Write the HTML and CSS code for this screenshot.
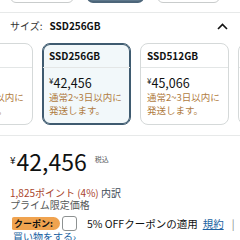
FILE: index.html
```html
<!DOCTYPE html>
<html lang="ja">
<head>
<meta charset="utf-8">
<link rel="stylesheet" href="styles.css">
</head>
<body>
<div class="swatches">
  <div class="swatch sw1"></div>
  <div class="swatch sw2 sel"></div>
  <div class="swatch sw3"></div>
</div>
<div class="rule rule-top"></div>
<div class="size-head">
  <span class="label">サイズ:</span><span class="value">SSD256GB</span>
  <svg class="chev" width="11" height="7" viewBox="0 0 11 7"><path d="M1 6 L5.5 1.5 L10 6" fill="none" stroke="#111" stroke-width="1.6"/></svg>
</div>
<div class="cards">
  <div class="card">
    <div class="card-head">SSD128</div>
    <div class="card-body">
      <div class="price"><span class="yen">¥</span>37,800</div>
      <div class="ship">通常2~3日以内に発送します。</div>
    </div>
  </div>
  <div class="card selected">
    <div class="card-head">SSD256GB</div>
    <div class="card-body">
      <div class="price"><span class="yen">¥</span>42,456</div>
      <div class="ship">通常2~3日以内に発送します。</div>
    </div>
  </div>
  <div class="card">
    <div class="card-head">SSD512GB</div>
    <div class="card-body">
      <div class="price"><span class="yen">¥</span>45,066</div>
      <div class="ship">通常2~3日以内に発送します。</div>
    </div>
  </div>
  <div class="card">
    <div class="card-head">SSD1TB</div>
    <div class="card-body">
      <div class="price"><span class="yen">¥</span>52,800</div>
      <div class="ship">通常2~3日以内に発送します。</div>
    </div>
  </div>
</div>
<div class="rule rule-mid"></div>
<div class="big-price"><span class="big-yen">¥</span><span class="big-num">42,456</span><span class="tax">税込</span></div>
<div class="points"><span class="pt">1,825ポイント (4%)</span> <span class="breakdown">内訳</span></div>
<div class="prime">プライム限定価格</div>
<div class="coupon">
  <span class="badge">クーポン:</span>
  <span class="check"></span>
  <span class="coupon-text">5% OFFクーポンの適用</span>
  <a class="terms">規約</a>
  <span class="sep">|</span>
</div>
<div class="shop">買い物をする›</div>
</body>
</html>
```

FILE: styles.css
```css
html, body {
  margin: 0;
  padding: 0;
  background: #fff;
}
body {
  width: 240px;
  height: 240px;
  overflow: hidden;
  font-family: "Noto Sans CJK JP", "Noto Sans", sans-serif;
  color: #0f1111;
}
.swatches {
  height: 3px;
  overflow: hidden;
  display: flex;
  align-items: flex-end;
  padding-left: 10px;
  gap: 13px;
}
.swatch {
  flex: none;
  height: 20px;
  border: 1px solid #c9cccc;
  border-radius: 6px;
  box-sizing: border-box;
}
.sw1 { width: 64px; }
.sw2 { width: 57px; }
.sw3 { width: 63px; }
.swatch.sel {
  border: 2px solid #4d667a;
  background: #5e778b;
}
.rule {
  height: 1px;
  background: #e7e9e9;
}
.rule-top { margin-top: 9px; }
.size-head {
  display: flex;
  align-items: center;
  height: 14px;
  margin-top: 6px;
  padding: 0 12px 0 10px;
  font-size: 10px;
  line-height: 14px;
}
.size-head .label { color: #333; margin-right: 7px; font-size: 10px; }
.size-head .value { font-weight: 700; }
.size-head .chev { margin-left: auto; }
.cards {
  display: flex;
  gap: 9px;
  margin-top: 10px;
  margin-left: -56px;
}
.card {
  flex: none;
  width: 89px;
  height: 82px;
  box-sizing: border-box;
  border: 1px solid #d5d9d9;
  border-radius: 8px;
  background: #fff;
  overflow: hidden;
}
.card.selected {
  border-color: #3f5b70;
  box-shadow: inset 0 0 0 1px #3f5b70;
  background: #f2f8fa;
}
.card-head {
  padding: 5px 6px 4px;
  font-size: 10px;
  line-height: 14px;
  font-weight: 700;
  border-bottom: 1px solid #e3e6e6;
}
.card-body {
  padding: 8px 6px 0;
}
.price {
  font-size: 12.5px;
  line-height: 14px;
}
.yen {
  font-size: 8px;
  vertical-align: top;
  line-height: 10px;
}
.ship {
  margin-top: 1px;
  font-size: 9.5px;
  line-height: 13px;
  color: #b07c42;
}
.rule-mid { margin-top: 10px; }
.big-price {
  margin-top: 11px;
  padding-left: 10px;
  height: 28px;
  display: flex;
  align-items: flex-start;
}
.big-yen {
  font-size: 10px;
  line-height: 10px;
  margin-top: 8px;
  margin-right: 1px;
}
.big-num {
  font-size: 23px;
  line-height: 28px;
}
.tax {
  font-size: 7px;
  line-height: 8px;
  margin-top: 8px;
  margin-left: 8px;
  color: #565959;
}
.points {
  margin-top: 11px;
  padding-left: 10px;
  font-size: 10px;
  line-height: 13px;
}
.pt { color: #a9442c; }
.breakdown { color: #3d4b57; }
.prime {
  padding-left: 10px;
  font-size: 10px;
  line-height: 12px;
  color: #565959;
}
.coupon {
  display: flex;
  align-items: center;
  margin-top: 5px;
  padding-left: 12px;
  height: 15px;
  font-size: 10.5px;
}
.badge {
  height: 13px;
  line-height: 13px;
  padding: 0 7px 0 2px;
  background: #f0a34f;
  font-weight: 700;
  font-size: 9px;
  border-radius: 2px 7px 7px 2px;
}
.check {
  width: 13px;
  height: 13px;
  margin-left: 2px;
  border: 1px solid #8d9191;
  border-radius: 3px;
  background: #fff;
}
.coupon-text {
  margin-left: 10px;
  color: #0f1111;
}
.terms {
  margin-left: 5px;
  color: #2162a1;
  text-decoration: underline;
}
.sep {
  margin-left: 8px;
  color: #888;
}
.shop {
  padding-left: 13px;
  font-size: 10px;
  line-height: 12px;
  color: #2162a1;
}
```
